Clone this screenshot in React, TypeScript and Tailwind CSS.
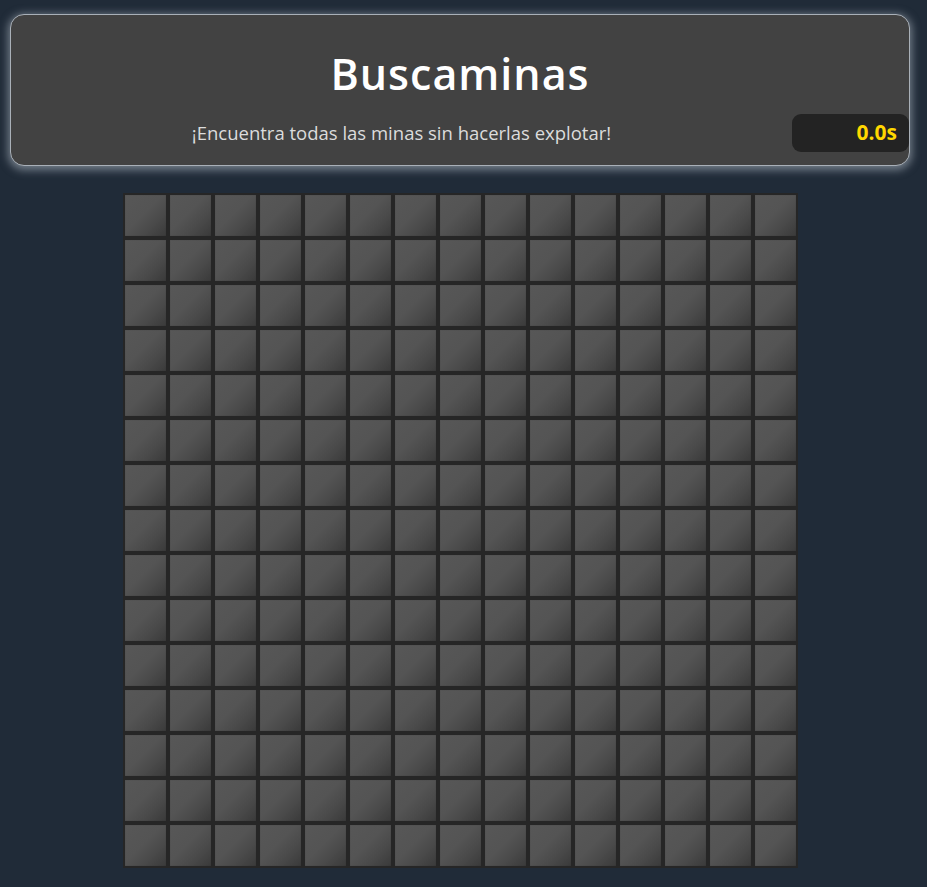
import React from "react";

export default function App() {
  const cells = Array.from({ length: 225 }, (_, i) => i);
  return (
    <div
      className="min-h-[887px] w-full bg-[#202b38] pt-[14px] pl-[10px] pr-[17px] pb-[19px]"
      style={{ fontFamily: '"Open Sans", "Noto Sans", sans-serif' }}
    >
      <div className="rounded-[14px] border border-[#a9b0b8] bg-[#424242] shadow-[0_2px_8px_2px_rgba(200,210,220,0.5)] pt-[32px] pb-[12px] h-[152px]">
        <h1 className="text-center text-[43px] leading-[54px] font-semibold tracking-[1px] text-white">
          Buscaminas
        </h1>
        <div className="mt-[13px] flex items-center">
          <p className="flex-1 text-center text-[18.5px] text-[#dcdcdc]">
            ¡Encuentra todas las minas sin hacerlas explotar!
          </p>
          <div className="w-[117px] h-[38px] rounded-[9px] bg-[#232323] flex items-center justify-end pr-[12px] text-[21px] font-bold text-[#ffd700]">
            0.0s
          </div>
        </div>
      </div>
      <div className="mt-[27px] flex justify-center">
        <div className="grid grid-cols-[repeat(15,41px)] gap-[4px] bg-[#262626] p-[2px]">
          {cells.map((i) => (
            <div
              key={i}
              className="h-[41px] w-[41px] bg-[linear-gradient(135deg,#575757_0%,#545454_45%,#4a4a4a_70%,#3a3a3a_100%)] shadow-[inset_0_0_1px_rgba(0,0,0,0.3)]"
            />
          ))}
        </div>
      </div>
    </div>
  );
}
